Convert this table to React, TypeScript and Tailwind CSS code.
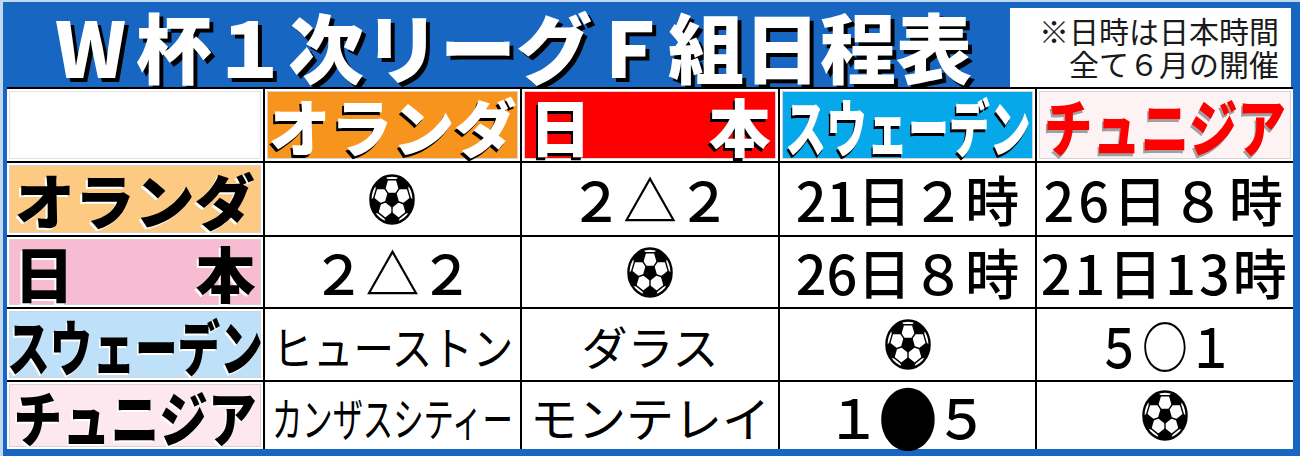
import React from 'react'

// soccer ball drawn as svg, slightly taller than wide like the print
function Ball() {
  const pt = (phi: number, r: number, cx = 50, cy = 50) => {
    const a = (phi * Math.PI) / 180
    return [cx + r * Math.sin(a), cy - r * Math.cos(a)]
  }
  const poly = (pts: number[][]) => pts.map((p) => p.join(',')).join(' ')
  const centre = [0, 1, 2, 3, 4].map((k) => pt(k * 72 + 180, 14))
  const outer = [0, 1, 2, 3, 4].map((i) => {
    const c = pt(i * 72 + 180, 41)
    return [0, 1, 2, 3, 4].map((k) => pt(i * 72 + k * 72, 15, c[0], c[1]))
  })
  return (
    <svg width="46" height="51" viewBox="1 1 98 98" preserveAspectRatio="none">
      <defs>
        <clipPath id="ball">
          <circle cx="50" cy="50" r="46" />
        </clipPath>
      </defs>
      <circle cx="50" cy="50" r="46" fill="#fff" />
      <g clipPath="url(#ball)" stroke="#000" strokeWidth="3" strokeLinejoin="round">
        <polygon points={poly(centre)} fill="#000" />
        {outer.map((p, i) => (
          <polygon key={i} points={poly(p)} fill="#000" />
        ))}
        {[0, 1, 2, 3, 4].map((i) => {
          const a = pt(i * 72 + 180, 14)
          const b = pt(i * 72 + 180, 26)
          return <line key={'l' + i} x1={a[0]} y1={a[1]} x2={b[0]} y2={b[1]} />
        })}
        {[0, 1, 2, 3, 4].map((i) => {
          const a = outer[i][4]
          const b = outer[(i + 1) % 5][1]
          return <line key={'h' + i} x1={a[0]} y1={a[1]} x2={b[0]} y2={b[1]} />
        })}
      </g>
      <circle cx="50" cy="50" r="46" fill="none" stroke="#000" strokeWidth="5" />
    </svg>
  )
}

function Label({ bg, children }: { bg: string; children: React.ReactNode }) {
  return (
    <div className="bg-white p-[2px]">
      <div className={`h-full border border-[#d4d4d4] flex items-center justify-center ${bg}`}>{children}</div>
    </div>
  )
}

function Cell({ children }: { children?: React.ReactNode }) {
  return <div className="bg-white flex items-center justify-center">{children}</div>
}

const head = 'text-[62px] font-black leading-none text-white [text-shadow:-2px_3px_0_#000] whitespace-nowrap shrink-0'
const side = 'text-[60px] font-black leading-none text-black [text-shadow:-2px_2px_0_#fff] whitespace-nowrap shrink-0'
const num = 'text-[54px] font-medium leading-none text-black whitespace-nowrap shrink-0'
const venue = 'text-[46px] font-normal leading-none text-black whitespace-nowrap shrink-0'

export default function App() {
  return (
    <div className="w-[1300px] h-[456px] bg-[#1766c2] border-t-[2px] border-l-[3px] border-[#c3d7ee] pl-[4px] pr-[7px] pb-[7px] flex flex-col font-['Noto_Sans_CJK_JP',sans-serif]">
      <div className="h-[85px] flex">
        <h1 className="flex-1 pl-[48px] flex items-center text-white text-[76px] font-black leading-[80px] whitespace-nowrap [text-shadow:4px_4px_0_#000]">
          <span className="pr-[10px]">W</span>杯１次リーグＦ組日程表
        </h1>
        <div className="w-[281px] mt-[6px] mr-[2px] bg-white pr-[12px] pt-[6px] text-right text-[30px] leading-[33px] text-[#1a1a1a]">
          <p>※日時は日本時間</p>
          <p>全て６月の開催</p>
        </div>
      </div>

      <div className="border-t-2 border-black bg-black grid grid-cols-5 grid-rows-[72px_72px_70px_71px_67px] gap-[2px]">
        {/* header row */}
        <div className="bg-white p-[2px]">
          <div className="h-full border border-[#e2e2e2]" />
        </div>
        <Label bg="bg-[#f7941d]">
          <span className={head}>オランダ</span>
        </Label>
        <Label bg="bg-[#ff0000]">
          <div className={`${head} w-full flex justify-between px-[4px]`}>
            <span>日</span>
            <span>本</span>
          </div>
        </Label>
        <Label bg="bg-[#07a8ea]">
          <span className={`${head} inline-block scale-x-[0.66]`}>スウェーデン</span>
        </Label>
        <Label bg="bg-[#fdf3f5]">
          <span className="text-[62px] font-black leading-none text-[#ff0000] [text-shadow:-2px_3px_0_#a0a0a0] whitespace-nowrap shrink-0 inline-block scale-x-[0.78]">
            チュニジア
          </span>
        </Label>

        {/* オランダ */}
        <Label bg="bg-[#fdca84]">
          <span className={side}>オランダ</span>
        </Label>
        <Cell>
          <Ball />
        </Cell>
        <Cell>
          <span className={num}>２△２</span>
        </Cell>
        <Cell>
          <span className={num}>21日２時</span>
        </Cell>
        <Cell>
          <span className={`${num} tracking-[4px]`}>26日８時</span>
        </Cell>

        {/* 日本 */}
        <Label bg="bg-[#f7bcd2]">
          <div className={`${side} w-full flex justify-between px-[4px]`}>
            <span>日</span>
            <span>本</span>
          </div>
        </Label>
        <Cell>
          <span className={num}>２△２</span>
        </Cell>
        <Cell>
          <Ball />
        </Cell>
        <Cell>
          <span className={num}>26日８時</span>
        </Cell>
        <Cell>
          <span className={`${num} tracking-[3px]`}>21日13時</span>
        </Cell>

        {/* スウェーデン */}
        <Label bg="bg-[#bee0f8]">
          <span className={`${side} inline-block scale-x-[0.71]`}>スウェーデン</span>
        </Label>
        <Cell>
          <span className={`${venue} inline-block scale-x-[0.88]`}>ヒューストン</span>
        </Cell>
        <Cell>
          <span className={venue}>ダラス</span>
        </Cell>
        <Cell>
          <Ball />
        </Cell>
        <Cell>
          <span className={`${num} inline-block scale-x-[0.85]`}>５○１</span>
        </Cell>

        {/* チュニジア */}
        <Label bg="bg-[#fde8ef]">
          <span className={`${side} inline-block scale-x-[0.81]`}>チュニジア</span>
        </Label>
        <Cell>
          <span className={`${venue} inline-block scale-x-[0.66]`}>カンザスシティー</span>
        </Cell>
        <Cell>
          <span className="text-[48px] font-normal leading-none text-black whitespace-nowrap shrink-0">モンテレイ</span>
        </Cell>
        <Cell>
          <span className={`${num} flex items-center`}>
            １<span className="inline-block scale-x-[1.1] scale-y-[1.3]">●</span>５
          </span>
        </Cell>
        <Cell>
          <Ball />
        </Cell>
      </div>
    </div>
  )
}
